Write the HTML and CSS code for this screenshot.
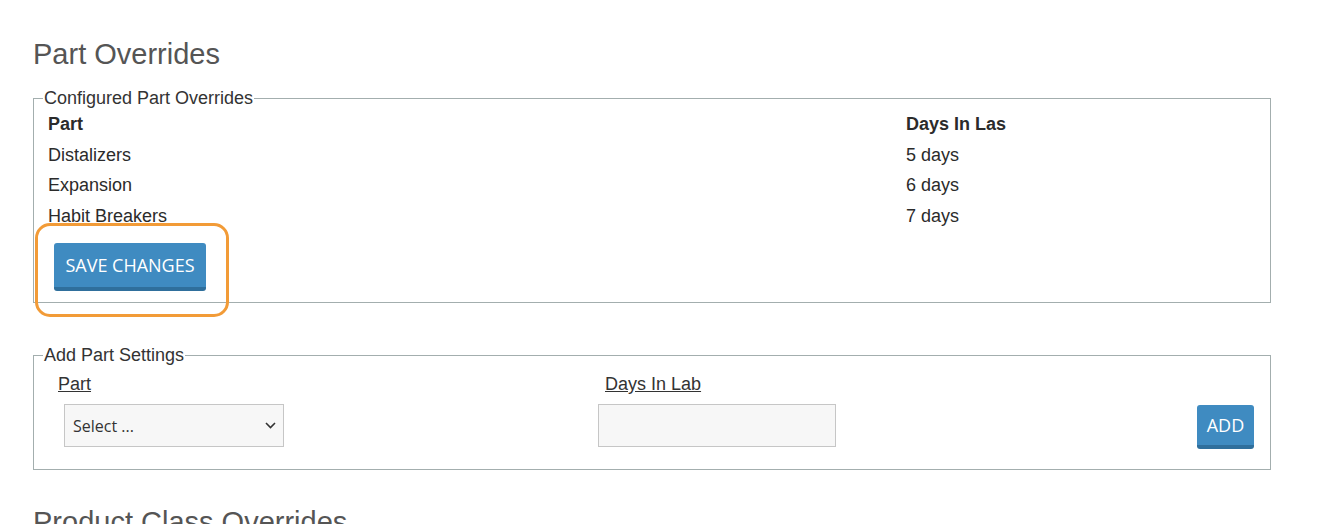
FILE: index.html
```html
<!DOCTYPE html>
<html lang="en">

<head>
    <meta charset="UTF-8">
    <meta name="viewport" content="width=device-width, initial-scale=1.0">
    <title>Part Overrides</title>
    <link rel="stylesheet" href="styles.css">
</head>

<body>

    <!-- Part Overrides -->
    <section class="overrides">
        <h1 class="page-title">Part Overrides</h1>

        <fieldset class="box">
            <legend>Configured Part Overrides</legend>
            <table class="override-table">
                <thead>
                    <tr>
                        <th class="col-part">Part</th>
                        <th>Days In Las</th>
                    </tr>
                </thead>
                <tbody>
                    <tr><td>Distalizers</td><td>5 days</td></tr>
                    <tr><td>Expansion</td><td>6 days</td></tr>
                    <tr><td>Habit Breakers</td><td>7 days</td></tr>
                </tbody>
            </table>
            <div class="save-wrap">
                <button class="btn btn-save" type="button">Save Changes</button>
                <span class="highlight"></span>
            </div>
        </fieldset>

        <fieldset class="box box-add">
            <legend>Add Part Settings</legend>
            <div class="add-row">
                <div class="field field-part">
                    <label for="part-select">Part</label>
                    <div class="select-wrap">
                        <select id="part-select">
                            <option>Select ...</option>
                        </select>
                        <svg class="chevron" width="11" height="7" viewBox="0 0 11 7">
                            <path d="M1 1l4.5 4.5L10 1" fill="none" stroke="#333" stroke-width="1.6"/>
                        </svg>
                    </div>
                </div>
                <div class="field field-days">
                    <label for="days-input">Days In Lab</label>
                    <input id="days-input" type="text">
                </div>
                <div class="field field-add">
                    <button class="btn btn-add" type="button">Add</button>
                </div>
            </div>
        </fieldset>

        <h1 class="page-title next-title">Product Class Overrides</h1>
    </section>

</body>
</html>
```

FILE: styles.css
```css
/* General Reset */
* {
    box-sizing: border-box;
}

body {
    margin: 0;
    font-family: "Liberation Sans", Arial, sans-serif;
    font-size: 18px;
    color: #2b2b2b;
    background-color: #fff;
    overflow: hidden;
}

.overrides {
    width: 1238px;
    margin-left: 33px;
}

.page-title {
    margin: 38px 0 17px;
    font-size: 29px;
    font-weight: normal;
    line-height: 33px;
    color: #555;
}

.next-title {
    margin-top: 36px;
}

/* Fieldsets */
.box {
    margin: 0;
    padding: 0 16px 11px 9px;
    border: 1px solid #a3aeae;
    min-width: 0;
}

.box legend {
    padding: 0 1px;
    color: #333;
    line-height: 21px;
}

.box-add {
    margin-top: 42px;
    padding-bottom: 20px;
}

/* Table */
.override-table {
    width: 100%;
    border-collapse: collapse;
}

    .override-table th,
    .override-table td {
        padding: 5px 4px 5px 5px;
        line-height: 20.5px;
        text-align: left;
    }

    .override-table .col-part {
        width: 858px;
    }

/* Buttons */
.btn {
    font-family: "Open Sans", sans-serif;
    font-size: 18px;
    color: #fff;
    text-transform: uppercase;
    background-color: #3f8bc1;
    border: none;
    border-bottom: 4px solid #2f6f9c;
    border-radius: 3px;
    cursor: pointer;
}

.save-wrap {
    position: relative;
    display: inline-block;
    margin: 12px 0 0 11px;
}

.btn-save {
    display: block;
    width: 152px;
    height: 48px;
    padding: 0;
}

.highlight {
    position: absolute;
    left: -19px;
    top: -20px;
    width: 194px;
    height: 94px;
    border: 3px solid #f29b37;
    border-radius: 15px;
    pointer-events: none;
}

/* Add Part row */
.add-row {
    display: grid;
    grid-template-columns: 555px 1fr auto;
    align-items: start;
}

.field label {
    display: block;
    margin-top: 8px;
    line-height: 21px;
    text-decoration: underline;
    color: #333;
}

.field-part label {
    margin-left: 15px;
}

.field-days label {
    margin-left: 7px;
}

.select-wrap {
    position: relative;
    width: 220px;
    margin: 9px 0 0 21px;
}

    .select-wrap select {
        width: 100%;
        height: 43px;
        padding: 0 8px;
        font-family: "Open Sans", sans-serif;
        font-size: 16px;
        color: #333;
        background-color: #f7f7f7;
        border: 1px solid #c6c6c6;
        border-radius: 0;
        appearance: none;
        -webkit-appearance: none;
    }

    .select-wrap .chevron {
        position: absolute;
        right: 8px;
        top: 18px;
    }

.field-days input {
    display: block;
    width: 238px;
    height: 43px;
    margin-top: 9px;
    background-color: #f7f7f7;
    border: 1px solid #c6c6c6;
}

.btn-add {
    display: block;
    width: 57px;
    height: 44px;
    margin-top: 39px;
    padding: 0;
}
```
